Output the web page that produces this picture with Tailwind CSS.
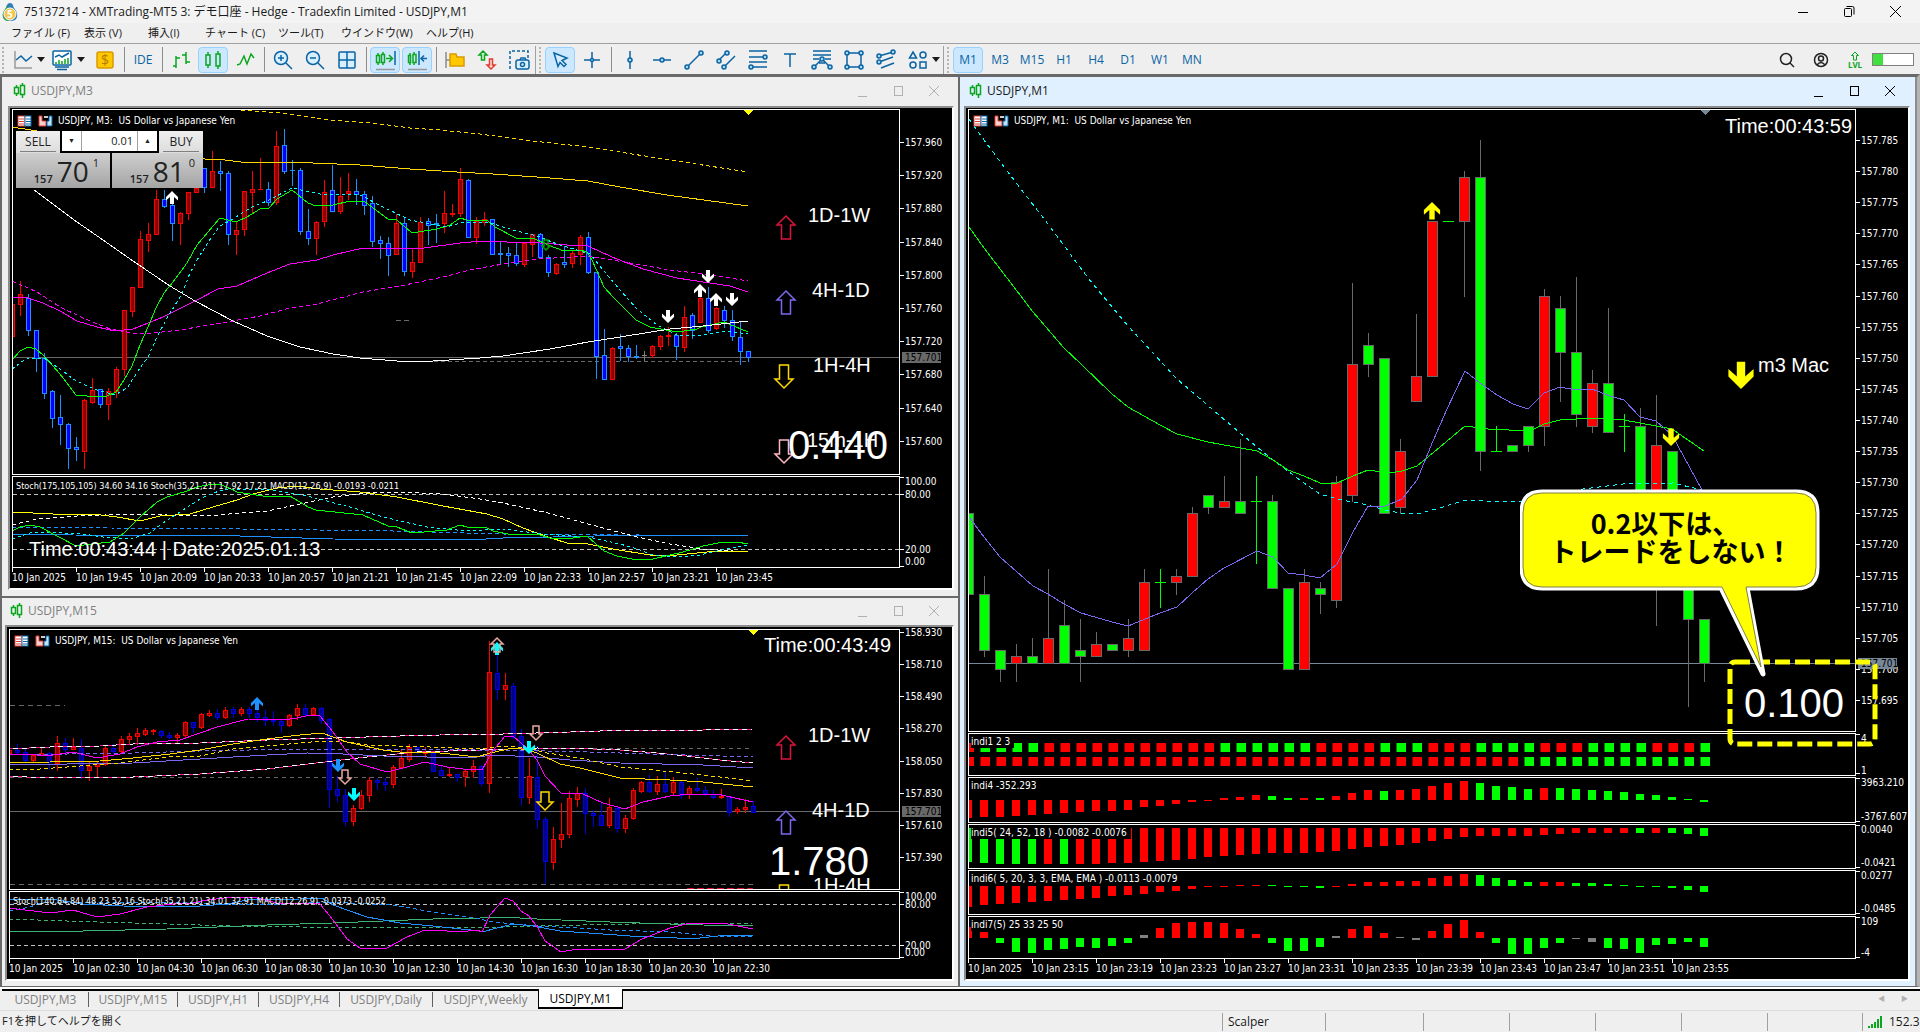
<!DOCTYPE html>
<html lang="ja">
<head>
  <meta charset="UTF-8" />
  <meta name="viewport" content="width=device-width, initial-scale=1.0"/>
  <title>75137214 - XMTrading-MT5 3: デモ口座 - Hedge - Tradexfin Limited - USDJPY,M1</title>
  <script src="https://cdn.jsdelivr.net/npm/@tailwindcss/browser@4"></script>
  <style>
    body { font-family: 'Open Sans', 'Noto Sans CJK JP', sans-serif; }
    .chart { font-family: 'DejaVu Sans Condensed', 'Open Sans', sans-serif; font-size: 10px; color: #fff; }
    .chart svg text { fill: #fff; }
    .big { font-family: 'Liberation Sans', Arial, sans-serif; }
    .tool svg { width: 24px; height: 24px; fill: none; stroke: #0a64a4; stroke-width: 1.5; }
    svg.plot { shape-rendering: crispEdges; }
  </style>
</head>
<body class="h-screen flex flex-col overflow-hidden bg-[#efefef] text-[12px] text-[#1a1a1a]">

  <!-- title bar -->
  <header class="h-[23px] shrink-0 flex items-center bg-[#f3f3f3] pl-[2px]">
    <svg class="w-4 h-5 mr-[6px]" viewBox="0 0 16 20"><path d="M8 1c3 0 3 3 4 5 2 3 4 5 3 9-1 3-3 4-7 4s-6-1-7-4c-1-4 1-6 3-9 1-2 1-5 4-5z" fill="#2c7fb8"/><path d="M5 3c-2 5-5 8-4 12 1 3 3 4 7 4z" fill="#3fa34d"/><circle cx="8" cy="12" r="6" fill="#f3c64b" stroke="#fff"/><text x="5" y="16" font-size="10" font-weight="700" fill="#fff">5</text></svg>
    <h1 class="flex-1 whitespace-nowrap">75137214 - XMTrading-MT5 3: デモ口座 - Hedge - Tradexfin Limited - USDJPY,M1</h1>
    <button aria-label="最小化" class="w-[46px] h-5 flex items-center justify-center"><svg width="10" height="10" stroke="#000"><path d="M0 5.5h10"/></svg></button>
    <button aria-label="元に戻す" class="w-[46px] h-5 flex items-center justify-center"><svg width="11" height="11" fill="none" stroke="#000"><rect x=".5" y="2.500" width="7" height="8" rx="1"/><path d="M2.500 .5h6q1.500 0 1.500 1.500v6.500"/></svg></button>
    <button aria-label="閉じる" class="w-[46px] h-5 mr-[2px] flex items-center justify-center"><svg width="11" height="11" stroke="#000"><path d="M0 0l11 11M11 0L0 11"/></svg></button>
  </header>

  <!-- menu -->
  <nav class="h-[20px] shrink-0 flex items-center pl-[11px] text-[11px] whitespace-nowrap">
    <a href="#" class="w-[73px]">ファイル (F)</a>
    <a href="#" class="w-[64px]">表示 (V)</a>
    <a href="#" class="w-[57px]">挿入(I)</a>
    <a href="#" class="w-[73px]">チャート (C)</a>
    <a href="#" class="w-[63px]">ツール(T)</a>
    <a href="#" class="w-[85px]">ウインドウ(W)</a>
    <a href="#">ヘルプ(H)</a>
  </nav>

  <!-- toolbar -->
  <div class="tool h-[31px] shrink-0 flex items-center border-t border-[#a0a0a0] pl-[2px] pt-px">
    <span class="w-[5px] h-[26px] border-l-2 border-dotted border-[#b4b4b4]"></span>
    <button class="w-8 h-[26px] flex items-center justify-center" aria-label="ライン"><svg><path d="M4 3v17h17" stroke="#9a9a9a"/><path d="M5 12l5-4 5 5 6-5"/></svg></button>
    <button class="-ml-[2px] w-[9px] flex" aria-label="ライン種類"><span class="border-x-4 border-t-[5px] border-x-transparent border-t-[#1a1a1a]"></span></button>
    <button class="w-8 h-[26px] flex items-center justify-center" aria-label="定型チャート"><svg><rect x="3" y="3" width="18" height="14" rx="1" fill="#fff"/><path d="M5 9l4-2 3 2 7-4"/><path d="M6 16v-2M9 16v-4M12 16v-3M15 16v-5M18 16v-6" stroke="#0aa61e"/><path d="M5 19h14M7 21.500h10" /></svg></button>
    <button class="-ml-[1px] w-[12px] flex" aria-label="定型チャート種類"><span class="border-x-4 border-t-[5px] border-x-transparent border-t-[#1a1a1a]"></span></button>
    <button class="w-8 h-[26px] flex items-center justify-center" aria-label="新規注文"><svg><rect x="4" y="4" width="16" height="16" rx="2" fill="#ffc800" stroke="#d99b00"/><text x="8" y="17" font-size="14" fill="#b57a00" stroke="none">$</text></svg></button>
    <span class="w-[6px] h-[25px] flex justify-center"><i class="w-px bg-[#8c8c8c]"></i></span>
    <button class="w-8 h-[26px] text-[#0a64a4]">IDE</button>
    <span class="w-[6px] h-[25px] flex justify-center"><i class="w-px bg-[#8c8c8c]"></i></span>
    <button class="w-8 h-[26px] flex items-center justify-center" aria-label="バーチャート"><svg style="stroke:#0aa61e"><path d="M7 8v12M4 18h3M7 10h4M17 4v12M13 7h4M17 14h4"/></svg></button>
    <button class="w-[30px] mx-px h-[26px] flex items-center justify-center rounded-sm border border-[#99d1ff] bg-[#cce8ff]" aria-label="ローソク足"><svg style="stroke:#0aa61e"><rect x="5" y="7" width="4" height="10"/><path d="M7 4v3M7 17v3M17 3v3M17 18v3"/><rect x="15" y="6" width="4" height="12"/></svg></button>
    <button class="w-8 h-[26px] flex items-center justify-center" aria-label="ラインチャート"><svg style="stroke:#0aa61e"><path d="M4 17l3-1 4-8 3 8 4-10 3 4"/></svg></button>
    <span class="w-[6px] h-[25px] flex justify-center"><i class="w-px bg-[#8c8c8c]"></i></span>
    <button class="w-8 h-[26px] flex items-center justify-center" aria-label="拡大"><svg><circle cx="10" cy="10" r="6.500" fill="#d8efff"/><path d="M15 15l6 6M7 10h6M10 7v6"/></svg></button>
    <button class="w-8 h-[26px] flex items-center justify-center" aria-label="縮小"><svg><circle cx="10" cy="10" r="6.500" fill="#d8efff"/><path d="M15 15l6 6M7 10h6"/></svg></button>
    <button class="w-8 h-[26px] flex items-center justify-center" aria-label="タイル"><svg><rect x="4" y="4" width="16" height="16" rx="1" fill="#d8efff"/><path d="M12 4v16M4 12h16"/></svg></button>
    <span class="w-[6px] h-[25px] flex justify-center"><i class="w-px bg-[#8c8c8c]"></i></span>
    <button class="w-[30px] mx-px h-[26px] flex items-center justify-center rounded-sm border border-[#99d1ff] bg-[#cce8ff]" aria-label="自動スクロール"><svg><path d="M5 5v12M10 4v13" stroke="#0aa61e"/><path d="M3.500 7.500h3v7h-3zM8.500 6.500h3v8h-3z" stroke="#0aa61e" fill="#cce8ff"/><path d="M13 10.500h6M16 7l3.500 3.500L16 14" stroke="#0aa61e"/><path d="M22 3v14"/><path d="M3 21.500h19" stroke="#9a9a9a"/></svg></button>
    <button class="w-[30px] mx-px h-[26px] flex items-center justify-center rounded-sm border border-[#99d1ff] bg-[#cce8ff]" aria-label="チャートシフト"><svg><path d="M5 5v12M9 4v13" stroke="#0aa61e"/><path d="M3.500 7.500h2v7h-2zM8 6.500h3v8h-3z" stroke="#0aa61e" fill="#cce8ff"/><path d="M14 3v14M16 10.500h6M19 7.500l-3 3 3 3"/><path d="M3 21.500h19" stroke="#9a9a9a"/></svg></button>
    <span class="w-[6px] h-[25px] flex justify-center"><i class="w-px bg-[#8c8c8c]"></i></span>
    <button class="w-8 h-[26px] flex items-center justify-center" aria-label="フォルダ"><svg><path d="M3 4v16M3 12h4" stroke="#8c8c8c"/><path d="M7 6h6l1 3h7v9H7z" fill="#ffc800" stroke="#d99b00"/></svg></button>
    <button class="w-8 h-[26px] flex items-center justify-center" aria-label="売買"><svg><path d="M8 3l-4 4h2.500v5h3V7H12z" stroke="#0aa61e" fill="#dff5e1"/><path d="M16 21l-4-4h2.500v-6h3v6H20z" stroke="#e03c31" fill="#fbe0de"/></svg></button>
    <button class="w-8 h-[26px] flex items-center justify-center" aria-label="スクリーンショット"><svg><path d="M3 21V3h18v8" stroke-dasharray="3 2"/><rect x="9" y="12" width="13" height="9" rx="2" fill="#d8efff"/><path d="M13 12l1-2h4l1 2"/><circle cx="15.500" cy="16.500" r="2"/></svg></button>
    <span class="w-[9px] h-[28px] flex gap-[3px]"><i class="w-px bg-[#a0a0a0]"></i><i class="my-px border-l-2 border-dotted border-[#b4b4b4]"></i></span>
    <button class="w-[30px] mx-px h-[26px] flex items-center justify-center rounded-sm border border-[#99d1ff] bg-[#cce8ff]" aria-label="カーソル"><svg><path d="M6 5l13 5-5 2.500 4 4-2 2-4-4-2 4z" fill="#d8efff"/></svg></button>
    <button class="w-8 h-[26px] flex items-center justify-center" aria-label="十字カーソル"><svg><path d="M12 4v6M12 14v6M4 12h6M14 12h6"/><circle cx="12" cy="12" r="1.500"/></svg></button>
    <span class="w-[6px] h-[25px] flex justify-center"><i class="w-px bg-[#8c8c8c]"></i></span>
    <button class="w-8 h-[26px] flex items-center justify-center" aria-label="垂直線"><svg><path d="M12 3v7M12 14v7"/><circle cx="12" cy="12" r="2" fill="#a9d8f5"/></svg></button>
    <button class="w-8 h-[26px] flex items-center justify-center" aria-label="水平線"><svg><path d="M3 12h7M14 12h7"/><circle cx="12" cy="12" r="2" fill="#a9d8f5"/></svg></button>
    <button class="w-8 h-[26px] flex items-center justify-center" aria-label="トレンドライン"><svg><path d="M6 18L18 6"/><circle cx="5" cy="19" r="2" fill="#a9d8f5"/><circle cx="19" cy="5" r="2" fill="#a9d8f5"/></svg></button>
    <button class="w-8 h-[26px] flex items-center justify-center" aria-label="チャネル"><svg><path d="M5 12l7-7M11 18l10-10"/><circle cx="5" cy="13" r="2" fill="#a9d8f5"/><circle cx="13" cy="5" r="2" fill="#a9d8f5"/><circle cx="10" cy="19" r="2" fill="#a9d8f5"/></svg></button>
    <button class="w-8 h-[26px] flex items-center justify-center" aria-label="フィボナッチ"><svg><path d="M3 3h18M3 9h14M3 14h18M7 19h14"/><circle cx="19" cy="9" r="2" fill="#a9d8f5"/><circle cx="5" cy="19" r="2" fill="#a9d8f5"/></svg></button>
    <button class="w-8 h-[26px] flex items-center justify-center" aria-label="テキスト"><svg><path d="M6 6h12M12 6v13"/></svg></button>
    <button class="w-8 h-[26px] flex items-center justify-center" aria-label="フィボファン"><svg><path d="M3 3h18M3 7h18M3 11h6M15 11h6M5 18l7-7 7 7M9 15h6"/><circle cx="12" cy="11" r="2" fill="#a9d8f5"/><circle cx="4" cy="19" r="2" fill="#a9d8f5"/><circle cx="20" cy="19" r="2" fill="#a9d8f5"/></svg></button>
    <button class="w-8 h-[26px] flex items-center justify-center" aria-label="長方形"><svg><rect x="5" y="5" width="14" height="14"/><circle cx="5" cy="5" r="2" fill="#a9d8f5"/><circle cx="19" cy="5" r="2" fill="#a9d8f5"/><circle cx="5" cy="19" r="2" fill="#a9d8f5"/><circle cx="19" cy="19" r="2" fill="#a9d8f5"/></svg></button>
    <button class="w-8 h-[26px] flex items-center justify-center" aria-label="回帰"><svg><path d="M5 8l14-4M5 14l14-5M7 20l13-5"/><circle cx="5" cy="8" r="2" fill="#a9d8f5"/><circle cx="19" cy="4" r="2" fill="#a9d8f5"/><circle cx="5" cy="14" r="2" fill="#a9d8f5"/></svg></button>
    <button class="w-8 h-[26px] flex items-center justify-center" aria-label="図形"><svg><path d="M7 4l3.500 6h-7z"/><circle cx="17" cy="7" r="3"/><circle cx="7" cy="17" r="3"/><rect x="14" y="14" width="6" height="6"/></svg></button>
    <button class="-ml-[2px] w-[11px] flex" aria-label="図形種類"><span class="border-x-4 border-t-[5px] border-x-transparent border-t-[#1a1a1a]"></span></button>
    <span class="w-[9px] h-[28px] flex gap-[3px]"><i class="w-px bg-[#a0a0a0]"></i><i class="my-px border-l-2 border-dotted border-[#b4b4b4]"></i></span>
    <button class="w-[30px] mx-px h-[26px] rounded-sm border border-[#99d1ff] bg-[#cce8ff] text-[#0a64a4]">M1</button>
    <button class="w-8 text-[#0a64a4]">M3</button>
    <button class="w-8 text-[#0a64a4]">M15</button>
    <button class="w-8 text-[#0a64a4]">H1</button>
    <button class="w-8 text-[#0a64a4]">H4</button>
    <button class="w-8 text-[#0a64a4]">D1</button>
    <button class="w-8 text-[#0a64a4]">W1</button>
    <button class="w-8 text-[#0a64a4]">MN</button>
    <button class="ml-auto w-[34px] flex justify-center" aria-label="検索"><svg style="stroke:#222;width:16px;height:16px"><circle cx="7" cy="7" r="5.500"/><path d="M11 11l4 4"/></svg></button>
    <button class="w-[34px] flex justify-center" aria-label="アカウント"><svg style="stroke:#222;width:16px;height:16px"><circle cx="8" cy="8" r="6.500"/><circle cx="8" cy="6.500" r="2.500"/><path d="M4 13q4-5 8 0"/></svg></button>
    <span class="w-[34px] flex flex-col items-center text-[8px] leading-[8px] font-bold text-[#0aa61e]"><svg style="stroke:#0aa61e;width:10px;height:10px;stroke-width:1"><path d="M5 1L1.500 4.500h2V9h3V4.500h2z"/></svg>LVL</span>
    <span class="w-[42px] h-[13px] mr-[6px] border border-[#808080] bg-white"><i class="block w-[10px] h-full bg-[#40e040]"></i></span>
  </div>

  <!-- chart windows -->
  <main class="flex-1 min-h-0 grid grid-cols-[956fr_957fr] gap-[2px] border-t-3 border-l-2 border-b border-r-3 border-[#696969] border-r-[#b4b4b4] bg-[#696969]">
    <div class="min-w-0 grid grid-rows-[519fr_388fr] gap-[2px]">

      <section class="min-h-0 flex flex-col bg-[#efefef] pl-[6px] pr-[4px] pb-[6px]">
        <div class="h-[29px] shrink-0 flex items-center pl-[5px] pr-[2px] pb-[2px] text-[#808080]">
          <svg width="14" height="16" class="mr-[4px]" fill="none" stroke="#0aa61e" stroke-width="1.500"><path d="M3.500 2v2M3.500 10v3M9.500 0v2M9.500 12v3"/><rect x="1.500" y="4.500" width="4" height="6"/><rect x="7.500" y="2.500" width="4" height="9"/></svg>
          <h2 class="flex-1">USDJPY,M3</h2>
          <button class="w-9 flex justify-center" aria-label="最小化"><svg width="9" height="12" stroke="#b0b0b0"><path d="M0 11.500h9"/></svg></button>
          <button class="w-9 flex justify-center" aria-label="最大化"><svg width="9" height="10" fill="none" stroke="#b0b0b0"><rect x=".5" y=".5" width="8" height="9"/></svg></button>
          <button class="w-9 flex justify-center" aria-label="閉じる"><svg width="10" height="10" stroke="#b0b0b0"><path d="M0 0l10 10M10 0L0 10"/></svg></button>
        </div>
        <div class="chart flex-1 min-h-0 flex flex-col bg-black border-2 border-t-[#8c8c8c] border-l-[#8c8c8c] border-b-white border-r-white pl-[2px] pt-[1px]">
          <div class="flex-1 min-h-0 flex">
            <div class="relative flex-1 min-w-0 border border-white overflow-hidden">
              <svg id="m3" class="plot absolute inset-0 w-full h-full"></svg>
              <svg id="m3tags" class="big absolute right-0 top-0 w-[140px] h-full"></svg>
              <h3 class="absolute left-1 top-[3px] flex items-center whitespace-pre"><span class="legend mr-[5px]"></span>USDJPY, M3:  US Dollar vs Japanese Yen</h3>
              <form class="absolute left-[3px] top-[21px] w-[187px] text-[#222]" style="font-family:'Open Sans',sans-serif">
                <div class="flex justify-between bg-black h-[22px]">
                  <button type="button" class="w-[44px] bg-linear-to-b from-[#efefef] to-[#dcdcdc] text-[12px]"><span class="block border-b border-[#808080] mx-1 leading-[19px]">SELL</span></button>
                  <div class="flex w-[95px] h-[20px] bg-white">
                    <button type="button" class="w-[19px] text-[7px]" aria-label="減らす">▼</button>
                    <input aria-label="数量" value="0.01" class="w-[57px] border-x border-[#a0a0a0] text-right pr-1 text-[11px]">
                    <button type="button" class="w-[19px] text-[7px]" aria-label="増やす">▲</button>
                  </div>
                  <button type="button" class="w-[44px] bg-linear-to-b from-[#efefef] to-[#dcdcdc] text-[12px]"><span class="block border-b border-[#808080] mx-1 leading-[19px]">BUY</span></button>
                </div>
                <div class="flex gap-[2px] bg-black h-[35px] text-[11px]">
                  <div class="flex-1 flex items-end justify-end gap-1 pr-[11px] bg-linear-to-b from-[#cfcfcf] to-[#a4a4a4]"><b class="font-semibold leading-[18px]">157</b><span class="text-[28px] leading-[33px]">70</span><span class="self-start leading-[20px]">1</span></div>
                  <div class="flex-1 flex items-end justify-end gap-1 pr-[8px] bg-linear-to-b from-[#cfcfcf] to-[#a4a4a4]"><b class="font-semibold leading-[18px]">157</b><span class="text-[28px] leading-[33px]">81</span><span class="self-start leading-[20px]">0</span></div>
                </div>
              </form>
            </div>
            <svg id="m3axis" class="w-[52px] h-full"></svg>
          </div>
          <div class="h-[92px] mt-px shrink-0 flex">
            <div class="relative flex-1 min-w-0 border border-white overflow-hidden">
              <svg id="m3sub" class="plot absolute inset-0 w-full h-full"></svg>
              <p class="absolute left-[3px] top-[2px] text-[9px] leading-[14px] whitespace-nowrap">Stoch(175,105,105) 34.60 34.16 Stoch(35,21,21) 17.92 17.21 MACD(12,26,9) -0.0193 -0.0211</p>
              <p class="big absolute left-[16px] bottom-[6px] text-[20px] leading-6 whitespace-nowrap">Time:00:43:44 | Date:2025.01.13</p>
            </div>
            <svg id="m3subaxis" class="w-[52px] h-full overflow-visible"></svg>
          </div>
          <div id="m3time" class="h-[20px] shrink-0 flex overflow-hidden"></div>
        </div>
      </section>

      <section class="min-h-0 flex flex-col bg-[#efefef] pl-[3px] pr-[4px] pb-[5px]">
        <div class="h-[27px] shrink-0 flex items-center pl-[5px] pr-[2px] pb-[2px] text-[#808080]">
          <svg width="14" height="16" class="mr-[4px]" fill="none" stroke="#0aa61e" stroke-width="1.500"><path d="M3.500 2v2M3.500 10v3M9.500 0v2M9.500 12v3"/><rect x="1.500" y="4.500" width="4" height="6"/><rect x="7.500" y="2.500" width="4" height="9"/></svg>
          <h2 class="flex-1">USDJPY,M15</h2>
          <button class="w-9 flex justify-center" aria-label="最小化"><svg width="9" height="12" stroke="#b0b0b0"><path d="M0 11.500h9"/></svg></button>
          <button class="w-9 flex justify-center" aria-label="最大化"><svg width="9" height="10" fill="none" stroke="#b0b0b0"><rect x=".5" y=".5" width="8" height="9"/></svg></button>
          <button class="w-9 flex justify-center" aria-label="閉じる"><svg width="10" height="10" stroke="#b0b0b0"><path d="M0 0l10 10M10 0L0 10"/></svg></button>
        </div>
        <div class="chart flex-1 min-h-0 flex flex-col bg-black border-2 border-t-[#8c8c8c] border-l-[#8c8c8c] border-b-white border-r-white pl-[2px] pt-[2px]">
          <div class="flex-1 min-h-0 flex">
            <div class="relative flex-1 min-w-0 border border-white overflow-hidden">
              <svg id="m15" class="plot absolute inset-0 w-full h-full"></svg>
              <svg id="m15tags" class="big absolute right-0 top-0 w-[140px] h-full"></svg>
              <h3 class="absolute left-1 top-[3px] flex items-center whitespace-pre"><span class="legend mr-[5px]"></span>USDJPY, M15:  US Dollar vs Japanese Yen</h3>
            </div>
            <svg id="m15axis" class="w-[52px] h-full overflow-visible"></svg>
          </div>
          <div class="h-[68px] mt-px shrink-0 flex">
            <div class="relative flex-1 min-w-0 border border-white overflow-hidden">
              <svg id="m15sub" class="plot absolute inset-0 w-full h-full"></svg>
              <p class="absolute left-[3px] top-[2px] text-[9px] leading-[14px] whitespace-nowrap">Stoch(140,84,84) 48.23 52.16 Stoch(35,21,21) 34.01 32.91 MACD(12,26,9) -0.0373 -0.0252</p>
            </div>
            <svg id="m15subaxis" class="w-[52px] h-full overflow-visible"></svg>
          </div>
          <div id="m15time" class="h-[20px] shrink-0 flex overflow-hidden"></div>
        </div>
      </section>
    </div>

    <section class="min-w-0 min-h-0 flex flex-col bg-[#e1f0ff] pl-[4px] pr-[5px] pb-[5px] border-r-2 border-[#8c8c8c]">
      <div class="h-[29px] shrink-0 flex items-center pl-[5px] pr-[2px] pb-[2px]">
        <svg width="14" height="16" class="mr-[4px]" fill="none" stroke="#0aa61e" stroke-width="1.500"><path d="M3.500 2v2M3.500 10v3M9.500 0v2M9.500 12v3"/><rect x="1.500" y="4.500" width="4" height="6"/><rect x="7.500" y="2.500" width="4" height="9"/></svg>
        <h2 class="flex-1">USDJPY,M1</h2>
        <button class="w-9 flex justify-center" aria-label="最小化"><svg width="9" height="12" stroke="#000"><path d="M0 11.500h9"/></svg></button>
        <button class="w-9 flex justify-center" aria-label="最大化"><svg width="9" height="10" fill="none" stroke="#000"><rect x=".5" y=".5" width="8" height="9"/></svg></button>
        <button class="w-9 flex justify-center" aria-label="閉じる"><svg width="10" height="10" stroke="#000"><path d="M0 0l10 10M10 0L0 10"/></svg></button>
      </div>
      <div class="chart relative flex-1 min-h-0 flex flex-col bg-black border-2 border-t-[#8c8c8c] border-l-[#8c8c8c] border-b-white border-r-white pl-[2px] pt-[1px]">
        <div class="flex-1 min-h-0 flex">
          <div class="relative flex-1 min-w-0 border border-white overflow-hidden">
            <svg id="m1" class="plot absolute inset-0 w-full h-full"></svg>
            <svg id="m1tags" class="big absolute right-0 top-0 w-[140px] h-full"></svg>
            <h3 class="absolute left-1 top-[3px] flex items-center whitespace-pre"><span class="legend mr-[5px]"></span>USDJPY, M1:  US Dollar vs Japanese Yen</h3>
          </div>
          <svg id="m1axis" class="w-[52px] h-full"></svg>
        </div>
        <div class="h-[43px] mt-px shrink-0 flex">
          <div class="relative flex-1 min-w-0 border border-white overflow-hidden"><svg id="ind1" class="plot absolute inset-0 w-full h-full"></svg><p class="absolute left-[2px] top-[2px] pr-1 leading-[12px] bg-black">indi1 2 3</p></div>
          <svg id="ax1" class="w-[52px] h-full"></svg>
        </div>
        <div class="h-[46px] mt-px shrink-0 flex">
          <div class="relative flex-1 min-w-0 border border-white overflow-hidden"><svg id="ind4" class="plot absolute inset-0 w-full h-full"></svg><p class="absolute left-[2px] top-[2px] pr-1 leading-[12px] bg-black">indi4 -352.293</p></div>
          <svg id="ax4" class="w-[52px] h-full"></svg>
        </div>
        <div class="h-[45px] mt-px shrink-0 flex">
          <div class="relative flex-1 min-w-0 border border-white overflow-hidden"><svg id="ind5" class="plot absolute inset-0 w-full h-full"></svg><p class="absolute left-[2px] top-[2px] pr-1 leading-[12px] bg-black">indi5( 24, 52, 18 ) -0.0082 -0.0076</p></div>
          <svg id="ax5" class="w-[52px] h-full"></svg>
        </div>
        <div class="h-[45px] mt-px shrink-0 flex">
          <div class="relative flex-1 min-w-0 border border-white overflow-hidden"><svg id="ind6" class="plot absolute inset-0 w-full h-full"></svg><p class="absolute left-[2px] top-[2px] pr-1 leading-[12px] bg-black">indi6( 5, 20, 3, 3, EMA, EMA ) -0.0113 -0.0079</p></div>
          <svg id="ax6" class="w-[52px] h-full"></svg>
        </div>
        <div class="h-[43px] mt-px shrink-0 flex">
          <div class="relative flex-1 min-w-0 border border-white overflow-hidden"><svg id="ind7" class="plot absolute inset-0 w-full h-full"></svg><p class="absolute left-[2px] top-[2px] pr-1 leading-[12px] bg-black">indi7(5) 25 33 25 50</p></div>
          <svg id="ax7" class="w-[52px] h-full"></svg>
        </div>
        <div id="m1time" class="h-[20px] shrink-0 flex overflow-hidden"></div>

        <!-- callout over the spread value -->
        <svg class="absolute right-[30px] top-[381px] w-[358px] h-[262px]" viewBox="0 0 358 262">
          <rect x="210" y="173" width="145" height="82" rx="5" fill="none" stroke="#ffff00" stroke-width="5" stroke-dasharray="15 5"/>
          <path id="bubble" d="M22 3H276Q297 3 297 24V78Q297 99 276 99H227L243 185L201 99H22Q2 99 2 78V24Q2 3 22 3Z" fill="#ffff00" stroke="#ffffff" stroke-width="5" stroke-linejoin="round"/>
          <path d="M22 4H276Q296 4 296 24V78Q296 98 276 98H226L241 178L202 98H22Q3 98 3 78V24Q3 4 22 4Z" fill="#ffff00" stroke="#808040" stroke-width="1"/>
          <g font-family="'Noto Sans CJK JP', sans-serif" font-weight="700" font-size="27" text-anchor="middle">
            <text x="145" y="45" style="fill:#000">0.2以下は、</text>
            <text x="151" y="73" style="fill:#000">トレードをしない！</text>
          </g>
        </svg>
      </div>
    </section>
  </main>

  <!-- chart tabs -->
  <nav class="h-[24px] shrink-0 flex items-start border-t-2 border-b border-t-white border-b-[#dcdcdc] text-[#808080] whitespace-nowrap">
    <div class="flex-1 h-[19px] flex border-t-2 border-black ml-[2px] pl-px">
      <a href="#" class="w-[86px] text-center border-r border-[#606060] my-px leading-[16px]">USDJPY,M3</a>
      <a href="#" class="w-[89px] text-center border-r border-[#606060] my-px leading-[16px]">USDJPY,M15</a>
      <a href="#" class="w-[81px] text-center border-r border-[#606060] my-px leading-[16px]">USDJPY,H1</a>
      <a href="#" class="w-[81px] text-center border-r border-[#606060] my-px leading-[16px]">USDJPY,H4</a>
      <a href="#" class="w-[93px] text-center border-r border-[#606060] my-px leading-[16px]">USDJPY,Daily</a>
      <a href="#" class="w-[105px] text-center my-px leading-[16px]">USDJPY,Weekly</a>
      <a href="#" class="w-[85px] text-center -mt-[2px] h-[20px] leading-[19px] bg-white border border-t-0 border-b-2 border-black text-black">USDJPY,M1</a>
      <span class="ml-auto mr-3 flex items-center gap-4 text-[7px] text-[#b0b0b0]"><button aria-label="前">◀</button><button aria-label="次">▶</button></span>
    </div>
  </nav>

  <!-- status bar -->
  <footer class="h-[21px] shrink-0 flex items-center pl-[2px] whitespace-nowrap overflow-hidden">
    <span class="flex-1 text-[11px]">F1を押してヘルプを開く</span>
    <span class="w-[103px] h-[18px] leading-[18px] pl-[5px] border-l border-[#a0a0a0]">Scalper</span>
    <span class="w-[98px] h-[18px] border-l border-[#a0a0a0]"></span>
    <span class="w-[86px] h-[18px] border-l border-[#a0a0a0]"></span>
    <span class="w-[86px] h-[18px] border-l border-[#a0a0a0]"></span>
    <span class="w-[86px] h-[18px] border-l border-[#a0a0a0]"></span>
    <span class="w-[86px] h-[18px] border-l border-[#a0a0a0]"></span>
    <span class="w-[95px] h-[18px] border-l border-[#a0a0a0]"></span>
    <span class="w-[58px] h-[18px] pl-[5px] flex items-center gap-[6px] overflow-hidden border-l border-[#a0a0a0]"><svg width="15" height="12" class="shrink-0" stroke="#0aa61e" stroke-width="2"><path d="M1 12v-2M4 12V8M7 12V6M10 12V3M13 12V0"/></svg>152.3</span>
  </footer>

  <script>
    const $ = id => document.getElementById(id);
    const WHITE = "#ffffff", GOLD = "#ffd700", LIME = "#00ff00", AQUA = "#00ffff", MAGENTA = "#ff00ff",
      SLATE = "#7b68ee", DODGER = "#1e90ff", GRAY = "#696969", SILVER = "#c0c0c0", RED = "#ff0000";

    // candles: "colour high top bottom low", y in thirds of a pixel, one bar every 8px
    const m3Bars = `r 612 612 708 708,r 544 583 613 646,b 583 595 691 704,b 691 691 775 812,b 760 775 878 893,b 870 874 953 980,b 885 952 971 1031,b 969 972 1043 1103,b 1011 1042 1048 1079,r 897 901 1054 1103,r 834 871 905 910,b 867 868 911 920,r 865 874 913 956,r 801 808 873 890,r 631 631 808 825,r 562 562 634 647,r 393 418 562 562,r 369 401 419 453,r 270 298 401 401,b 270 298 317 321,b 310 316 370 420,r 335 340 370 431,r 277 277 338 356,r 200 264 276 276,b 205 205 262 275,r 153 213 260 260,b 183 214 220 270,b 213 219 401 431,r 364 391 401 461,r 274 274 388 405,r 213 268 277 340,r 174 268 268 268,b 246 268 307 315,r 93 139 307 311,b 87 136 212 219,b 180 209 211 254,b 205 210 392 401,b 328 394 415 431,r 363 367 415 461,r 240 277 364 377,b 195 271 334 334,r 231 287 332 339,r 219 274 280 297,b 237 274 283 312,b 273 281 314 341,b 289 310 422 437,b 408 419 430 474,b 411 430 464 524,r 343 370 461 461,b 354 370 512 524,r 444 487 512 530,r 352 367 487 487,b 354 364 374 431,b 343 370 371 425,r 273 340 370 395,r 312 338 341 347,r 204 238 338 348,b 237 241 410 410,r 352 364 410 430,r 335 358 366 374,b 357 358 461 461,b 425 458 463 492,b 441 460 466 497,b 430 466 488 494,r 425 430 491 497,r 401 401 433 467,b 400 401 472 473,b 464 472 515 527,r 488 493 518 521,b 437 487 493 500,r 450 460 490 500,r 405 412 461 491,b 397 412 515 518,b 517 517 769 833,b 687 766 836 836,r 740 745 838 838,b 702 739 745 779,b 736 745 769 783,b 735 769 771 773,x 753 766 767 780,r 735 739 766 770,r 706 709 739 746,r 682 706 708 734,b 700 706 739 776,r 618 652 742 753,b 640 646 689 713,r 592 595 667 667,b 562 595 689 695,r 620 625 685 688,b 618 631 661 680,b 631 661 709 719,b 664 712 754 791,b 754 754 772 782`;
    const m15Bars = `r 450 450 458 458,b 433 450 457 459,b 444 455 479 485,r 464 466 479 485,r 441 458 464 465,b 457 459 485 506,r 407 430 488 509,b 413 430 446 455,r 413 441 446 447,b 417 443 509 533,r 485 498 509 539,r 487 490 499 527,r 437 444 492 495,b 432 444 452 460,r 407 418 452 460,r 399 408 418 433,r 384 400 409 433,r 385 391 401 406,r 388 391 393 401,b 391 392 406 411,b 396 406 412 413,r 400 406 412 428,r 364 367 406 410,b 366 367 382 397,r 340 343 382 384,r 330 340 344 347,b 328 340 350 356,r 321 331 350 355,b 321 328 338 351,r 322 328 338 345,b 320 328 340 352,b 330 340 352 363,b 330 352 361 374,b 333 361 364 375,b 356 363 374 396,r 342 344 374 377,r 312 325 344 358,b 312 325 341 345,r 322 325 341 344,b 321 325 359 370,b 354 358 568 620,b 528 568 586 602,b 568 586 664 674,r 615 625 664 674,r 570 586 625 628,r 532 539 586 602,b 533 539 546 566,b 535 546 552 570,r 495 502 553 560,r 447 475 502 505,r 433 442 476 482,b 440 442 455 460,r 440 456 458 470,b 457 459 512 513,b 494 511 526 527,r 500 523 526 527,b 522 523 530 542,r 508 512 529 557,r 480 499 512 531,b 495 499 550 555,r 122 216 550 575,b 160 220 266 297,r 219 256 266 297,b 250 259 412 414,b 388 408 590 614,r 473 529 590 608,b 437 532 658 683,b 652 658 782 848,r 681 718 785 808,r 608 703 718 740,r 574 595 703 711,r 561 580 597 618,b 565 580 640 700,b 630 640 646 677,b 608 646 674 675,r 594 622 674 680,b 620 623 683 696,r 645 653 683 696,r 565 571 653 657,r 542 547 572 575,b 525 547 572 575,r 528 553 572 581,b 515 553 574 576,r 532 547 575 582,b 544 547 584 593,r 558 565 581 593,b 535 565 571 574,b 558 571 580 585,b 570 581 590 594,r 566 588 590 593,b 588 589 635 647,r 620 626 634 638,r 596 620 626 635,b 604 619 635 637`;
    // candles of M1: "colour high top bottom low" in points above 157.000
    const m1Bars = `g 725 725 712 712,g 715 712 703 702,g 703 703 700 698,r 704 702 701 698,g 705 702 701 701,r 716 705 701 701,g 711 707 701 701,g 708 703 702 698,r 706 704 702 702,g 704 704 703 703,r 708 705 703 702,r 716 714 703 703,x 716 714 714 710,r 716 715 714 712,r 726 725 715 715,g 728 728 726 725,r 731 727 726 726,g 737 727 725 725,x 731 727 727 717,g 728 727 713 713,g 713 713 700 700,r 716 714 700 700,g 714 713 712 709,r 731 730 711 710,r 762 749 728 727,g 754 752 749 747,g 750 750 725 725,r 737 735 726 725,r 757 747 743 743,r 772 772 747 747,x 772 772 772 772,r 780 779 772 760,g 785 779 735 732,x 739 735 735 735,g 736 736 735 735,g 739 739 736 735,r 761 760 739 736,g 760 758 751 743,g 763 751 741 739,r 748 746 739 738,g 758 746 738 738,x 741 739 739 735,g 742 739 725 725,r 744 736 715 707,g 735 735 720 720,g 720 720 708 694,g 708 708 701 698`;

    function thirds(oy) { return v => Math.round(v / 3) - oy; }

    function candles(text, step, half, y, skin) {
      return text.split(",").map((row, i) => {
        const [c, ...v] = row.split(" ");
        const [h, t, b, l] = v.map(n => y(+n));
        const x = i * step - 1, [fill, line] = skin[c];
        const wick = `<path d="M${x + .5} ${h}V${l + 1}" stroke="${line}"/>`;
        if (c === "x" || b - t < 1) return wick + `<path d="M${x - half} ${t + .5}h${half * 2 + 1}" stroke="${line}"/>`;
        return wick + `<rect x="${x - half + .5}" y="${t + .5}" width="${half * 2}" height="${Math.max(b - t, 1)}" fill="${fill}" stroke="${line}"/>`;
      }).join("");
    }

    function line(pts, color, dash, dx = 0, dy = 0, k = 3) {
      const p = pts.trim().split(/\s+/).map(s => s.split(",")).map(([x, y]) => `${Math.round(x / k) - dx},${Math.round(y / k) - dy}`).join(" ");
      return `<polyline points="${p}" fill="none" stroke="${color}" ${dash ? `stroke-dasharray="${dash}"` : ""}/>`;
    }
    const level = (y, color, dash, x1 = 0, x2 = 2000) =>
      `<path d="M${x1} ${y + .5}H${x2}" stroke="${color}" ${dash ? `stroke-dasharray="${dash}"` : ""}/>`;

    // filled arrow, tip at (x, y); dir 1 = up, -1 = down
    const solid = (x, y, dir, color, k = 1) =>
      `<path transform="translate(${x} ${y}) scale(${k} ${k * dir})" d="M0 0L6 6V9.500L2 6V13H-2V6L-6 9.500V6Z" fill="${color}" shape-rendering="auto"/>`;
    const hollow = (x, y, w, h, dir, color) =>
      `<path transform="translate(${x} ${y}) scale(1 ${dir})" d="M0 0L${w} ${w}H${w / 2}V${h}H${-w / 2}V${w}H${-w}Z" fill="none" stroke="${color}" stroke-width="1.500" shape-rendering="auto"/>`;
    const label = (x, y, size, text) => `<text x="${x}" y="${y}" font-size="${size}">${text}</text>`;

    const mt5 = { r: ["#8b0000", RED], b: ["#0000ff", DODGER], x: ["none", "#808080"] };
    const mt5dark = { r: ["#8b0000", RED], b: ["#00008b", "#0000e0"] };
    const m1skin = { r: [RED, GRAY], g: [LIME, GRAY], x: [LIME, LIME] };

    // ---- USDJPY,M3 ----
    const a = (p, c, d) => line(p, c, d, 13, 10);
    $("m3").innerHTML = level(247, GRAY) + level(210, GRAY, "5 3", 383, 399) + level(251, GRAY, "4 3", 400, 735)
      + candles(m3Bars, 8, 2, thirds(10), mt5)
      + a("37,80 93,89 615,178 675,181 723,185 877,185 940,190 1080,195 1230,207 1370,216 1480,221 1610,232 1765,244 1860,262 2000,284 2244,317", GOLD)
      + a("723,31 845,39 990,59 1120,68 1230,83 1320,91 1440,103 1573,121 1765,142 2010,181 2244,215", GOLD, "4 3")
      + a("37,592 85,594 130,608 180,633 232,662 290,682 345,693 400,688 490,650 585,603 655,568 710,557 800,520 870,492 950,481 1000,466 1090,445 1210,445 1250,448 1380,430 1450,422 1520,427 1621,428 1700,436 1765,438 1837,472 1930,507 2030,535 2110,546 2190,557 2244,575", MAGENTA)
      + a("37,542 110,577 180,620 250,655 330,687 400,700 460,699 540,690 610,677 700,664 780,648 870,625 940,614 1090,575 1200,558 1330,530 1410,511 1510,493 1610,478 1765,469 1890,490 2010,509 2110,521 2190,534 2244,542", MAGENTA, "4 3")
      + a("37,780 60,752 85,742 109,748 133,768 180,822 229,886 260,889 320,887 349,875 373,840 397,797 421,735 445,680 469,625 493,578 520,545 560,488 590,435 625,395 661,355 709,367 740,350 780,328 808,323 830,297 877,271 925,308 949,319 1000,315 1050,303 1093,303 1165,357 1190,359 1237,400 1310,388 1350,375 1381,353 1400,360 1460,361 1485,380 1549,415 1600,415 1645,435 1693,454 1741,449 1760,455 1775,480 1813,560 1840,592 1909,660 1950,682 2030,695 2090,687 2102,680 2173,667 2244,697", LIME)
      + a("37,806 80,775 133,775 180,808 229,842 290,871 345,884 380,865 421,805 445,770 470,710 500,655 545,582 570,520 600,465 640,405 661,378 700,358 750,325 800,302 877,265 960,281 1080,285 1150,320 1230,360 1340,380 1381,368 1460,366 1540,390 1610,407 1670,433 1741,452 1770,463 1813,513 1860,570 1909,625 1970,675 2030,705 2110,704 2180,692 2244,701", AQUA, "3 3")
      + a("103,270 230,365 310,420 400,483 511,557 585,604 700,664 800,708 900,741 1000,762 1080,775 1190,784 1300,784 1440,775 1510,768 1650,748 1765,726 1860,710 2010,687 2110,677 2244,664", WHITE)
      + solid(159, 81, 1, WHITE) + solid(655, 213, -1, WHITE) + solid(687, 174, 1, WHITE) + solid(695, 173, -1, WHITE)
      + solid(703, 183, 1, WHITE) + solid(719, 196, -1, WHITE) + hollow(533, 140, 4, 10, -1, "#00a000")
      + `<path d="M730 0h10l-5 5z" fill="#ffff00"/>`;
    const s3 = (p, c, d) => line(p, c, d, 13, 377);
    $("m3sub").innerHTML = level(17, SILVER, "4 3") + level(72, SILVER, "4 3")
      + s3("37,1303 220,1305 720,1309 1000,1318 1410,1319 1510,1315 1660,1311 1910,1306 2244,1309", DODGER)
      + s3("37,1281 330,1284 720,1287 950,1291 1180,1294 1400,1300 1510,1302 1860,1306 2060,1306", DODGER, "4 3")
      + s3("37,1275 110,1257 230,1247 400,1243 500,1246 620,1247 720,1240 800,1232 900,1213 1000,1192 1100,1180 1190,1177 1330,1181 1440,1196 1510,1208 1645,1238 1810,1284 1910,1310 2010,1333 2110,1347 2244,1355", WHITE, "4 3")
      + s3("37,1237 100,1238 160,1243 280,1241 350,1252 420,1262 480,1249 570,1243 640,1222 710,1200 760,1183 830,1165 890,1158 960,1168 1080,1176 1190,1190 1330,1217 1460,1243 1510,1257 1570,1285 1645,1310 1710,1333 1750,1329 1840,1346 1950,1366 2030,1364 2150,1352 2244,1354", "#ffff00")
      + s3("37,1318 90,1299 130,1296 250,1301 310,1310 390,1318 450,1298 480,1275 530,1243 600,1198 640,1178 680,1168 800,1167 920,1187 1050,1220 1150,1250 1280,1280 1400,1293 1510,1286 1630,1303 1765,1310 1860,1332 1910,1346 1960,1364 2030,1371 2100,1365 2150,1353 2244,1336", AQUA, "3 3")
      + s3("37,1292 60,1280 90,1275 120,1280 229,1338 330,1325 373,1300 421,1250 470,1205 500,1190 560,1172 590,1161 640,1153 660,1153 710,1175 808,1190 870,1188 925,1222 949,1231 1090,1245 1165,1278 1190,1280 1237,1300 1340,1290 1381,1276 1400,1281 1460,1283 1480,1292 1540,1306 1610,1303 1650,1314 1720,1314 1760,1308 1813,1353 1850,1367 1910,1379 1960,1378 2010,1365 2050,1356 2110,1337 2170,1327 2210,1327 2244,1332", LIME);

    const trend = hollow(27, 106, 9, 23, 1, "#dc143c") + label(49, 112, 20, "1D-1W")
      + hollow(27, 181, 9, 23, 1, SLATE) + label(53, 187, 20, "4H-1D")
      + hollow(25, 278, 9, 23, -1, GOLD) + label(54, 262, 20, "1H-4H");
    $("m3tags").innerHTML = trend + hollow(25, 353, 9, 23, -1, "#ffb6c1") + label(48, 337, 20, "15m-1H") + label(29, 349, 40, "0.440");
    $("m15tags").innerHTML = label(5, 22, 20, "Time:00:43:49") + trend + label(10, 245, 40, "1.780");
    $("m1tags").innerHTML = label(10, 23, 20, "Time:00:43:59") + solid(26, 279, -1, "#ffff00", 2.1) + label(43, 262, 20, "m3 Mac") + label(29, 607, 40, "0.100");

    // ---- USDJPY,M15 ----
    const b = (p, c, d) => line(p, c, d, 10, 30);
    const both = p => b(p, WHITE) + b(p, "#ff1493", "4 5");
    $("m15").innerHTML = level(181, GRAY) + level(75, GRAY, "5 4", 0, 55) + level(147, GRAY, "4 4", 0, 525)
      + level(254, GRAY, "5 4", 0, 743) + level(118, GRAY, "4 4", 527, 743)
      + b("2060,865 2140,865 2150,863 2260,864", "#dc143c", "7 3")
      + candles(m15Bars, 8, 2, thirds(30), mt5dark)
      + both("28,448 150,442 300,437 400,433 600,428 800,420 1000,413 1200,407 1440,403 1510,401 1710,396 1890,391 2110,389 2260,388")
      + both("28,529 80,532 400,530 600,522 800,507 1000,484 1100,471 1250,457 1440,449 1610,445 1780,446 1860,450 1970,458 2060,469 2160,481 2260,489")
      + b("28,461 200,461 400,458 600,454 900,446 1100,446 1430,450 1510,450 1760,455 1960,462 2260,472", SLATE, "4 3")
      + b("28,492 200,491 400,488 600,478 800,466 920,460 1030,462 1150,468 1280,470 1430,472 1480,466 1610,470 1710,481 1860,488 2110,495 2260,504", SLATE)
      + b("28,511 120,508 200,500 360,488 500,472 600,467 700,448 800,437 900,430 965,422 1040,425 1100,435 1290,441 1430,446 1520,439 1585,444 1640,458 1740,475 1860,500 1960,511 2110,524 2260,543", GOLD, "4 3")
      + b("28,490 150,487 300,484 400,475 510,462 600,450 700,432 800,417 850,412 900,404 965,400 1040,427 1150,450 1200,455 1290,455 1350,462 1430,471 1470,459 1540,443 1585,450 1612,460 1680,492 1740,503 1860,533 2010,540 2110,545 2260,562", GOLD)
      + b("28,463 80,463 140,467 220,457 292,475 360,461 410,441 470,425 540,420 600,398 650,382 745,358 850,360 890,353 930,346 960,348 1000,395 1040,455 1080,492 1160,517 1210,505 1276,487 1340,500 1390,506 1440,507 1445,510 1475,455 1516,409 1540,409 1588,450 1612,480 1636,527 1684,580 1750,582 1810,608 1876,628 1930,606 2010,587 2070,581 2150,581 2260,605", MAGENTA)
      + solid(247, 67, 1, DODGER) + solid(328, 142, -1, DODGER) + hollow(335, 154, 6, 14, -1, "#e9a9a0") + solid(344, 171, -1, AQUA)
      + solid(487, 12, 1, AQUA) + hollow(487, 8, 6, 14, 1, "#e9a9a0") + hollow(526, 110, 6, 14, -1, "#e9a9a0") + solid(519, 124, -1, AQUA)
      + hollow(535, 180, 8, 18, -1, GOLD) + `<path d="M738 0h10l-5 5z" fill="#ffff00"/>`;
    const s15 = (p, c, d) => line(p, c, d, 10, 292);
    $("m15sub").innerHTML = level(12, SILVER, "4 3") + level(53, SILVER, "4 3")
      + s15("28,994 250,994 500,986 800,975 1000,968 1300,956 1440,954 1510,951 1610,956 1830,965 2010,972 2110,975 2260,978", "#3cb371")
      + s15("28,957 200,962 400,968 600,975 700,979 900,980 1440,983 1590,978 1890,973 2260,970", "#3cb371", "4 3")
      + s15("28,933 90,920 120,908 200,905 400,905 600,910 750,916 850,912 980,907 1180,916 1280,932 1380,947 1440,958 1480,966 1610,979 1740,983 1830,990 2010,996 2140,1007 2260,1010", DODGER, "4 3")
      + s15("28,896 150,898 250,912 370,918 560,922 680,912 740,899 900,896 965,895 1000,915 1040,930 1100,950 1200,970 1300,978 1440,994 1445,997 1490,985 1540,973 1600,977 1680,993 1810,1003 1890,1008 2030,1015 2100,1013 2180,1006 2260,1006", DODGER)
      + s15("28,925 150,939 220,931 290,952 360,943 440,920 520,913 580,908 620,899 700,891 760,892 830,909 960,911 1000,960 1040,1018 1080,1045 1160,1045 1220,1012 1275,991 1340,993 1380,996 1430,991 1445,996 1470,945 1516,895 1540,902 1564,932 1588,947 1615,985 1636,1022 1684,1056 1730,1046 1805,1051 1828,1046 1876,1048 1925,1017 2010,983 2070,970 2170,970 2260,986", MAGENTA);

    // ---- USDJPY,M1 ----
    const py = p => Math.round(30 + (785 - p) * 6.222);
    const c = (p, col, d) => line(p, col, d, 0, 0, 1);
    $("m1").innerHTML = level(553, "#778899") + candles(m1Bars, 16, 5, py, m1skin)
      + c("0,9 15,30 48,74 79,114 119,168 159,216 208,269 271,323 304,350 335,373 351,384 368,389 399,395 415,400 431,403 448,404 471,398 496,390 533,392 554,391 588,386 614,379 654,374 704,373 733,380", AQUA, "4 4")
      + c("0,117 15,138 48,181 64,202 95,238 112,254 143,284 159,297 191,315 208,324 239,332 288,341 304,350 319,360 335,366 351,373 368,373 384,366 399,360 421,363 433,361 448,356 471,337 496,316 519,319 561,321 575,314 591,310 623,308 655,310 671,313 703,319 735,341", LIME)
      + c("0,407 15,427 31,447 64,476 79,484 95,494 112,503 143,512 159,516 191,503 208,497 223,483 239,469 255,458 288,441 304,447 319,463 335,465 351,468 368,454 384,422 399,396 414,397 433,389 448,370 464,331 471,315 478,299 496,261 511,273 528,285 544,294 559,299 575,283 591,277 607,280 623,279 641,286 655,290 671,307 687,311 703,325 733,380", SLATE)
      + solid(463, 92, 1, "#ffff00", 1.35) + solid(702, 336, -1, "#ffff00", 1.35)
      + `<path d="M731 0h10l-5 5z" fill="#778899"/>`;

    const tone = { r: RED, g: LIME, x: "#808080" };
    const rows = ["rgggg" + "r".repeat(11) + "gggggg" + "rrrr" + "ggg" + "rrr" + "gggg" + "rrr" + "gggg" + "rrrg", "r".repeat(35) + "g".repeat(12)];
    $("ind1").innerHTML = rows.map((row, k) => [...row].map((t, i) =>
      `<rect x="${i * 16 - 5}" y="${9 + k * 14}" width="10" height="9" fill="${tone[t]}"/><rect x="${i * 16 - 5}" y="${9 + k * 14}" width="1" height="9" fill="#000" fill-opacity=".5"/>`).join("")).join("");

    // histogram values in px from the zero line; a letter changes the colour
    function histogram(id, zero, text) {
      let col = "r";
      $(id).innerHTML = text.split(" ").map((s, i) => {
        if (/[rgx]/.test(s[0])) { col = s[0]; s = s.slice(1); }
        const v = +s;
        return `<rect x="${i * 16 - 5}" y="${v > 0 ? zero - v : zero}" width="8" height="${Math.abs(v)}" fill="${tone[col]}"/>`;
      }).join("");
    }
    histogram("ind4", 22, "r-18 -17 -17 -16 -15 -14 -13 -12 -11 -11 -10 -7 -6 -4 -2 -1 2 3 5 g4 2 r2 g2 r4 7 10 g9 r10 11 14 17 19 g17 14 13 11 r12 g12 11 10 9 8 6 5 3 1 -2");
    histogram("ind5", 3, "g-34 -35 -36 -36 -36 r-36 g-36 r-36 -36 -35 -35 -34 -33 -32 -31 -29 -28 -27 -26 -25 -25 -25 -24 -23 -21 -19 -18 -17 -15 -13 -11 -9 -8 -8 -8 -8 -7 -6 -5 -5 -5 -5 g-5 r-5 g-5 -6 -8");
    histogram("ind6", 15, "r-21 -19 -18 -17 -16 -15 -14 -13 -12 -10 -9 -8 -6 -5 -3 -1 -1 1 1 g1 -1 -1 -2 r-1 2 4 4 5 5 8 10 12 g11 8 6 4 r4 4 g3 3 2 1 -1 -1 -2 -4 -6");
    histogram("ind7", 21, "r11 6 g-5 -14 -15 -12 -11 -9 -10 -8 -5 x3 r10 15 16 16 15 9 4 g-5 -13 -13 -9 x2 r9 12 5 x1 -2 r7 14 18 6 g-5 -16 -16 -10 -5 x-1 -4 g-10 -11 -15 -7 -6 -4 -9");

    // ---- axes: [text, y, tick y] ----
    function axis(id, items, tag) {
      $(id).innerHTML = items.map(([t, y, k = y]) => `<path d="M0 ${k + .5}h4" stroke="#fff" shape-rendering="crispEdges"/><text x="5" y="${y + 4}">${t}</text>`).join("")
        + (tag ? `<rect x="2" y="${tag[0] - 5}" width="39" height="11" fill="${tag[1]}"/><text x="5" y="${tag[0] + 4}" style="fill:#000">157.701</text>` : "");
    }
    const scale = (from, step, n, y0, dy) => Array.from({ length: n }, (_, i) => [(from - step * i).toFixed(3), Math.round(y0 + dy * i)]);
    axis("m3axis", scale(157.96, .04, 10, 33, 33.2), [248, GRAY]);
    axis("m3subaxis", [["100.00", 5, 1], ["80.00", 18], ["20.00", 73], ["0.00", 85, 90]]);
    axis("m15axis", scale(158.93, .22, 8, 3, 32.15), [182, GRAY]);
    axis("m15subaxis", [["100.00", 5, 1], ["80.00", 13], ["20.00", 54], ["0.00", 61, 66]]);
    axis("m1axis", scale(157.785, .005, 19, 31, 31.11), [554, "#778899"]);
    axis("ax1", [["4", 5, 1], ["1", 37, 40]]);
    axis("ax4", [["3963.210", 5, 1], ["-3767.607", 39, 44]]);
    axis("ax5", [["0.0040", 5, 1], ["-0.0421", 38, 43]]);
    axis("ax6", [["0.0277", 5, 1], ["-0.0485", 38, 43]]);
    axis("ax7", [["109", 5, 1], ["-4", 36, 41]]);

    function times(id, list) {
      $(id).innerHTML = list.map(t => `<div class="w-16 shrink-0 whitespace-nowrap"><i class="block w-px h-1 bg-white"></i><span class="block leading-[11px]">10 Jan ${t}</span></div>`).join("");
    }
    times("m3time", ["2025", "19:45", "20:09", "20:33", "20:57", "21:21", "21:45", "22:09", "22:33", "22:57", "23:21", "23:45"]);
    times("m15time", ["2025", "02:30", "04:30", "06:30", "08:30", "10:30", "12:30", "14:30", "16:30", "18:30", "20:30", "22:30"]);
    times("m1time", ["2025", "23:15", "23:19", "23:23", "23:27", "23:31", "23:35", "23:39", "23:43", "23:47", "23:51", "23:55"]);

    document.querySelectorAll(".legend").forEach(el => el.innerHTML = `<svg width="36" height="12"><rect x="1" y="1" width="7" height="10" fill="#fff" stroke="#e03c31"/><rect x="8" y="1" width="6" height="10" fill="#fff" stroke="#0a64a4"/><path d="M2 4h5M2 6.500h5M2 9h5" stroke="#e03c31"/><path d="M9 4h5M9 6.500h5M9 9h5" stroke="#0a64a4"/><path d="M22 1h3v5h4v5h-7z" fill="#fbd0cc" stroke="#e03c31"/><path d="M35 1h-3v5h-2v5h5z" fill="#bfe3fa" stroke="#0a64a4"/><path d="M27 2h4" stroke="#ccc" stroke-width="2"/></svg>`);
  </script>
</body>
</html>
